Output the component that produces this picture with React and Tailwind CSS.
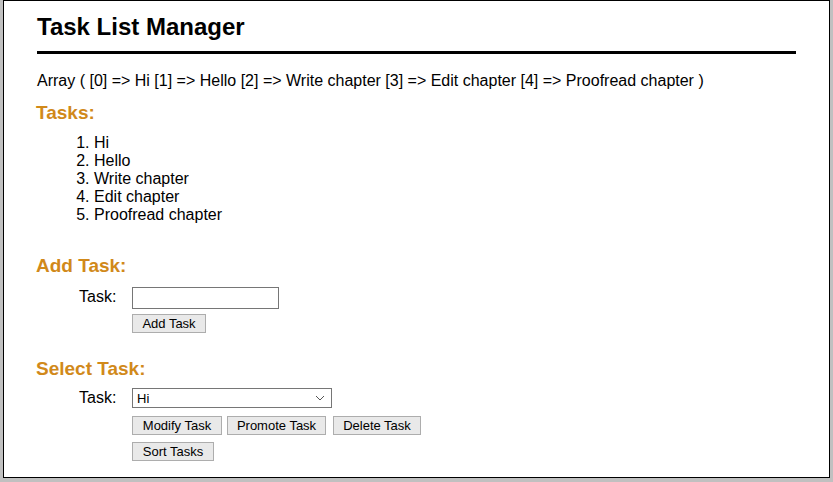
import React from 'react';

const tasks = ['Hi', 'Hello', 'Write chapter', 'Edit chapter', 'Proofread chapter'];

function Btn({ children, className = '' }) {
  return (
    <button
      type="button"
      className={`h-[19px] px-0 bg-[#e9e9e9] border border-[#adadad] text-[13px] leading-none text-black whitespace-nowrap ${className}`}
    >
      {children}
    </button>
  );
}

export default function App() {
  return (
    <div className="w-[833px] h-[482px] bg-[#c0c0c0] overflow-hidden font-['Liberation_Sans',Arial,sans-serif] text-black">
      <div className="ml-[3px] w-[827px] h-[478px] bg-white border border-black px-[33px]">
        {/* Header */}
        <h1 className="pt-[12px] pb-[10px] text-[24px] leading-[28px] font-bold border-b-[3px] border-black">
          Task List Manager
        </h1>

        <p className="mt-[18px] text-[16px] leading-[18px]">
          Array ( [0] =&gt; Hi [1] =&gt; Hello [2] =&gt; Write chapter [3] =&gt; Edit chapter [4] =&gt; Proofread chapter )
        </p>

        {/* Task list */}
        <h2 className="mt-[12px] -ml-[1px] text-[19px] leading-[22px] font-bold text-[#d1891a]">Tasks:</h2>
        <ol className="mt-[10px] pl-[57px] list-decimal text-[16px] leading-[18px]">
          {tasks.map((t) => (
            <li key={t}>{t}</li>
          ))}
        </ol>

        {/* Add task */}
        <h2 className="mt-[31px] -ml-[1px] text-[19px] leading-[22px] font-bold text-[#d1891a]">Add Task:</h2>
        <div className="mt-[10px] ml-[42px] flex">
          <label className="w-[53px] text-[16px] leading-[18px] pt-[1px]">Task:</label>
          <div className="flex flex-col items-start gap-[5px]">
            <input type="text" className="w-[147px] h-[22px] border border-[#767676] bg-white" />
            <Btn className="w-[74px]">Add Task</Btn>
          </div>
        </div>

        {/* Select task */}
        <h2 className="mt-[25px] -ml-[1px] text-[19px] leading-[22px] font-bold text-[#d1891a]">Select Task:</h2>
        <div className="mt-[8px] ml-[42px] flex">
          <label className="w-[53px] text-[16px] leading-[18px] pt-[1px]">Task:</label>
          <div className="flex flex-col items-start gap-[7px]">
            <div className="mb-[1px] w-[200px] h-[20px] border border-[#767676] flex items-center justify-between pl-[4px] pr-[6px] text-[13px] leading-none">
              <span>Hi</span>
              <svg width="10" height="6" viewBox="0 0 10 6" fill="none" stroke="#555" strokeWidth="1">
                <path d="M1 1 L5 5 L9 1" />
              </svg>
            </div>
            <div className="flex">
              <Btn className="w-[90px]">Modify Task</Btn>
              <Btn className="ml-[5px] w-[99px]">Promote Task</Btn>
              <Btn className="ml-[7px] w-[88px]">Delete Task</Btn>
            </div>
            <Btn className="w-[82px]">Sort Tasks</Btn>
          </div>
        </div>
      </div>
    </div>
  );
}
